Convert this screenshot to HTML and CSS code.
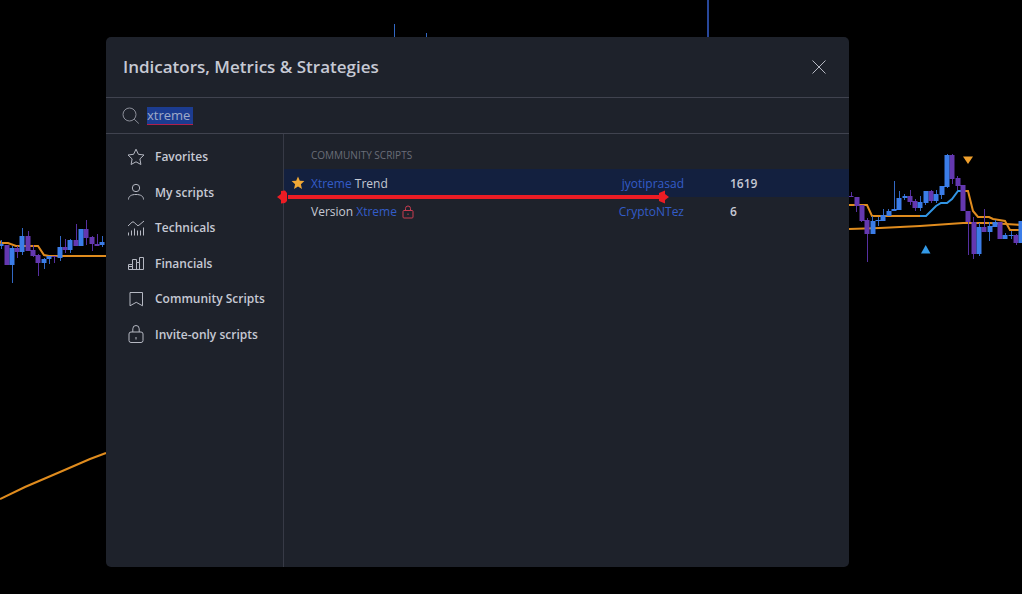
FILE: index.html
```html
<!DOCTYPE html>
<html lang="en">
    <head>
        <meta charset="utf-8">
        <title>Indicators, Metrics &amp; Strategies</title>
        <link rel="stylesheet" href="styles.css">
    </head>
    <body>
        <svg class="chart" viewBox="0 0 1022 594" preserveAspectRatio="xMidYMid slice" aria-hidden="true">
            <!-- moving averages -->
            <path class="line_orange" d="M-2 239L1 243H8L16 246H38L44 255L49 256H106"/>
            <path class="line_orange" d="M0 499L25 487L60 472L90 459L106 453"/>
            <path class="line_orange" d="M849 229L880 228L920 226L963 223H990L1022 225"/>
            <path class="line_orange" d="M849 205H867L872 216H920"/>
            <path class="line_blue" d="M920 216H926L936 206L941 203H947L952 199L958 191H963"/>
            <path class="line_orange" d="M963 191H968L973 211L978 217H989L993 219L1005 221L1010 230H1022"/>

            <!-- wicks -->
            <path class="wick_purple" d="M17.500 246V258M28.500 231V251M33.500 245V257M38.500 254V276M54.500 256V263M65.500 239V253M76.500 224V246M86.500 220V245M92.500 236V251M97.500 234V246"/>
            <path class="wick_blue" d="M1.500 240V249M12.500 246V283M22.500 228V255M44.500 258V269M49.500 256V264M60.500 236V261M70.500 239V253M102.500 236V247"/>
            <path class="wick_purple" d="M851.500 192V197M856.500 197V212M861.500 205V222M867.500 218V262M910.500 190V205M915.500 199V211M931.500 190V203M952.500 154V184M957.500 176V190M968.500 211V255M973.500 217V259M984.500 209V232M1016.500 234V245"/>
            <path class="wick_blue" d="M872.500 216V234M878.500 217V226M883.500 209V221M888.500 209V216M894.500 181V211M899.500 191V210M904.500 194V200M920.500 196V211M925.500 191V205M936.500 190V203M941.500 186V199M947.500 154V188M979.500 223V256M989.500 222V241M995.500 220V227M1005.500 233V239M1011.500 231V239"/>
            <path class="wick_blue" d="M394.500 24V40M426.500 33V40"/>
            <path class="wick_long" d="M708 0V40"/>

            <!-- candle bodies -->
            <path class="body_purple" d="M7 245V265M17 248V252M28 236V251M33 250V256M38 255V263M54 256V257M65 247V250M76 240V246M86 229V238M92 237V244M97 244V246"/>
            <path class="body_blue" d="M1 244V246M12 248V265M22 236V252M44 259V263M49 256V259M60 247V258M70 240V250M81 229V246M102 242V245"/>
            <path class="body_purple" d="M851 196V197M857 197V206M862 205V221M867 220V234M910 196V202M915 201V208M931 191V201M952 155V179M958 178V186M963 185V211M968 211V222M974 222V254M984 227V232M1000 222V239M1016 235V243"/>
            <path class="body_blue" d="M873 221V234M878 220V221M883 215V221M889 211V216M894 209V211M899 198V210M905 196V198M920 202V208M926 191V203M936 194V201M942 186V195M947 155V187M979 227V254M990 226V232M995 222V227M1005 235V239M1011 235V236M1021 221V243"/>

            <path class="sell_mark" d="M963 156.500H973L968 164Z"/>
            <path class="buy_mark" d="M921 253.500H930.500L925.700 245Z"/>
        </svg>

        <main class="dialog">
            <header class="dialog_header">
                <h1>Indicators, Metrics &amp; Strategies</h1>
                <button class="close_button" type="button" aria-label="Close">
                    <svg viewBox="0 0 16 16"><path d="M1.500 1.500L14.500 14.500M14.500 1.500L1.500 14.500"/></svg>
                </button>
            </header>

            <form class="search">
                <svg viewBox="0 0 18 18"><circle cx="7.500" cy="7.500" r="6.500"/><path d="M12.200 12.200L16.800 16.500"/></svg>
                <input type="text" value="xtreme" aria-label="Search" spellcheck="false">
            </form>

            <div class="dialog_body">
                <nav class="sidebar">
                    <a href="#favorites">
                        <svg viewBox="0 0 18 18"><path d="M9 1.200L11.400 6.300L17 7L12.900 10.900L13.900 16.500L9 13.800L4.100 16.500L5.100 10.900L1 7L6.600 6.300Z"/></svg>
                        Favorites
                    </a>
                    <a href="#my-scripts">
                        <svg viewBox="0 0 18 18"><circle cx="9" cy="5" r="3.700"/><path d="M1.500 16.500C1.500 13 4.500 11.500 9 11.500S16.500 13 16.500 16.500"/></svg>
                        My scripts
                    </a>
                    <a href="#technicals">
                        <svg viewBox="0 0 18 18"><path d="M1 7L5 3.200Q6 2.500 7 3.200L10 6.200Q11 7 12 6.200L17 2M1.500 13.500V16.500M4.500 11.500V16.500M7.500 9.500V16.500M10.500 11.500V16.500M13.500 11.500V16.500M16.500 8.500V16.500"/></svg>
                        Technicals
                    </a>
                    <a href="#financials">
                        <svg viewBox="0 0 18 18"><path d="M1.500 15.500V10.500H5.500V5.500H9.500V8.500H12.500V3.500H16.500V15.500ZM5.500 10.500V15.500M9.500 8.500V15.500M12.500 8.500V15.500M1.500 12.500H5.500"/></svg>
                        Financials
                    </a>
                    <a href="#community">
                        <svg viewBox="0 0 18 18"><path d="M3 2.500H15.500V15.800L9.250 12.300L3 15.800Z"/></svg>
                        Community Scripts
                    </a>
                    <a href="#invite-only">
                        <svg viewBox="0 0 18 18"><rect x="2" y="7" width="14" height="10.500" rx="2"/><path d="M5.800 7V3.800Q5.800 .5 9 .5T12.200 3.800V7M9 12V14.500"/></svg>
                        Invite-only scripts
                    </a>
                </nav>

                <section class="results">
                    <h2>COMMUNITY SCRIPTS</h2>
                    <table>
                        <tr class="selected">
                            <td class="star"><svg viewBox="0 0 14 14"><path d="M7 .5L8.800 4.700L13.400 5.100L9.900 8.200L11 12.900L7 10.400L3 12.900L4.100 8.200L.6 5.100L5.200 4.700Z"/></svg></td>
                            <td><mark>Xtreme</mark> Trend</td>
                            <td class="author"><a href="#jyotiprasad">jyotiprasad</a></td>
                            <td class="likes">1619</td>
                        </tr>
                        <tr>
                            <td class="star"></td>
                            <td>Version <mark>Xtreme</mark> <svg class="lock" viewBox="0 0 12 14"><rect x="1" y="5.500" width="10" height="7.500" rx="1"/><path d="M3.500 5.500V3.500Q3.500 1 6 1T8.500 3.500V5.500M6 8.500V10"/></svg></td>
                            <td class="author"><a href="#cryptontez">CryptoNTez</a></td>
                            <td class="likes">6</td>
                        </tr>
                    </table>
                    <svg class="underline" viewBox="0 0 392 14" aria-hidden="true"><path d="M0 7L4 4V1L8 .5L10 3V11L8 13L4 13.500V10ZM11 5H382V9H11ZM382 3L388 .5V4L392 7L388 10V13.500L382 11Z"/></svg>
                </section>
            </div>
        </main>
    </body>
</html>
```
FILE: styles.css
```css
* {
    box-sizing: border-box;
}

body {
    display: flex;
    min-height: 100vh;
    margin: 0;
    padding: 37px 173px 27px 106px;
    background: #000;
    color: #c6c9d4;
    font-family: "Trebuchet MS", "Open Sans", sans-serif;
    font-size: 13px;
}

svg {
    flex: none;
    fill: none;
    stroke: currentColor;
}

a {
    color: inherit;
    text-decoration: none;
}

/* price chart behind the dialog */
.chart {
    position: absolute;
    top: 0;
    left: 0;
    width: 100%;
    height: 100%;
}

.line_orange {
    stroke: #e08c1e;
    stroke-width: 2;
}

.line_blue {
    stroke: #3295e4;
    stroke-width: 2;
}

.wick_purple {
    stroke: #5630a0;
}

.wick_blue {
    stroke: #3268c4;
}

.wick_long {
    stroke: #28479a;
    stroke-width: 2;
}

.body_purple {
    stroke: #6438b0;
    stroke-width: 5;
}

.body_blue {
    stroke: #3b7de8;
    stroke-width: 5;
}

.sell_mark {
    fill: #f0a02c;
    stroke: none;
}

.buy_mark {
    fill: #339ae8;
    stroke: none;
}

.dialog {
    position: relative;
    display: flex;
    flex: 1;
    flex-direction: column;
    min-width: 0;
    background: #1e222b;
    border-radius: 5px;
}

.dialog_header {
    display: flex;
    align-items: center;
    justify-content: space-between;
    height: 61px;
    padding: 0 22px 0 17px;
    border-bottom: 1px solid #40434f;
}

h1 {
    margin: 0;
    font-size: 17px;
    font-weight: 600;
    line-height: 24px;
}

.close_button {
    display: flex;
    padding: 0;
    border: none;
    background: none;
    color: #b5b8c2;
    cursor: pointer;
}

.close_button svg {
    width: 16px;
    height: 16px;
}

.search {
    display: flex;
    align-items: center;
    gap: 7px;
    height: 36px;
    padding-left: 16px;
    border-bottom: 1px solid #40434f;
}

.search svg {
    width: 18px;
    height: 18px;
    color: #8b8e99;
}

.search input {
    width: 46px;
    height: 18px;
    padding: 0;
    border: none;
    border-bottom: 1px solid #b0204c;
    outline: none;
    background: #1c3c90;
    color: #a0abc8;
    font-family: inherit;
    font-size: 13px;
    font-weight: 500;
}

.dialog_body {
    display: flex;
    flex: 1;
}

.sidebar {
    display: grid;
    grid-auto-rows: 1fr;
    flex: none;
    align-self: flex-start;
    width: 177px;
    height: 218px;
    padding-top: 5px;
    font-size: 12px;
    font-weight: 600;
}

.sidebar a {
    display: flex;
    align-items: center;
    gap: 10px;
    padding-left: 21px;
}

.sidebar svg {
    width: 18px;
    height: 18px;
    color: #b5b8c2;
}

.results {
    position: relative;
    flex: 1;
    min-width: 0;
    border-left: 1px solid #373a46;
}

h2 {
    height: 35px;
    margin: 0;
    padding: 4px 0 0 27px;
    color: #6a6d78;
    font-size: 10px;
    font-weight: 400;
    line-height: 34px;
}

table {
    width: 100%;
    border-collapse: collapse;
    table-layout: fixed;
    font-size: 12px;
    font-weight: 500;
}

td {
    height: 28px;
    padding: 0;
    white-space: nowrap;
}

.selected {
    background: #13203f;
}

mark {
    background: none;
    color: #335cc8;
}

.star {
    width: 27px;
    padding-left: 7px;
}

.star svg {
    display: block;
    width: 14px;
    height: 14px;
    fill: #f0a836;
    stroke: none;
}

.lock {
    width: 12px;
    height: 14px;
    margin-left: 2px;
    color: #c83c50;
    vertical-align: middle;
}

.author {
    width: 100px;
    color: #335cc8;
    text-align: right;
}

.likes {
    width: 165px;
    padding-left: 46px;
    font-weight: 600;
}

.underline {
    position: absolute;
    top: 56px;
    left: -7px;
    width: 392px;
    height: 14px;
    fill: #ec1c24;
    stroke: none;
}
```
